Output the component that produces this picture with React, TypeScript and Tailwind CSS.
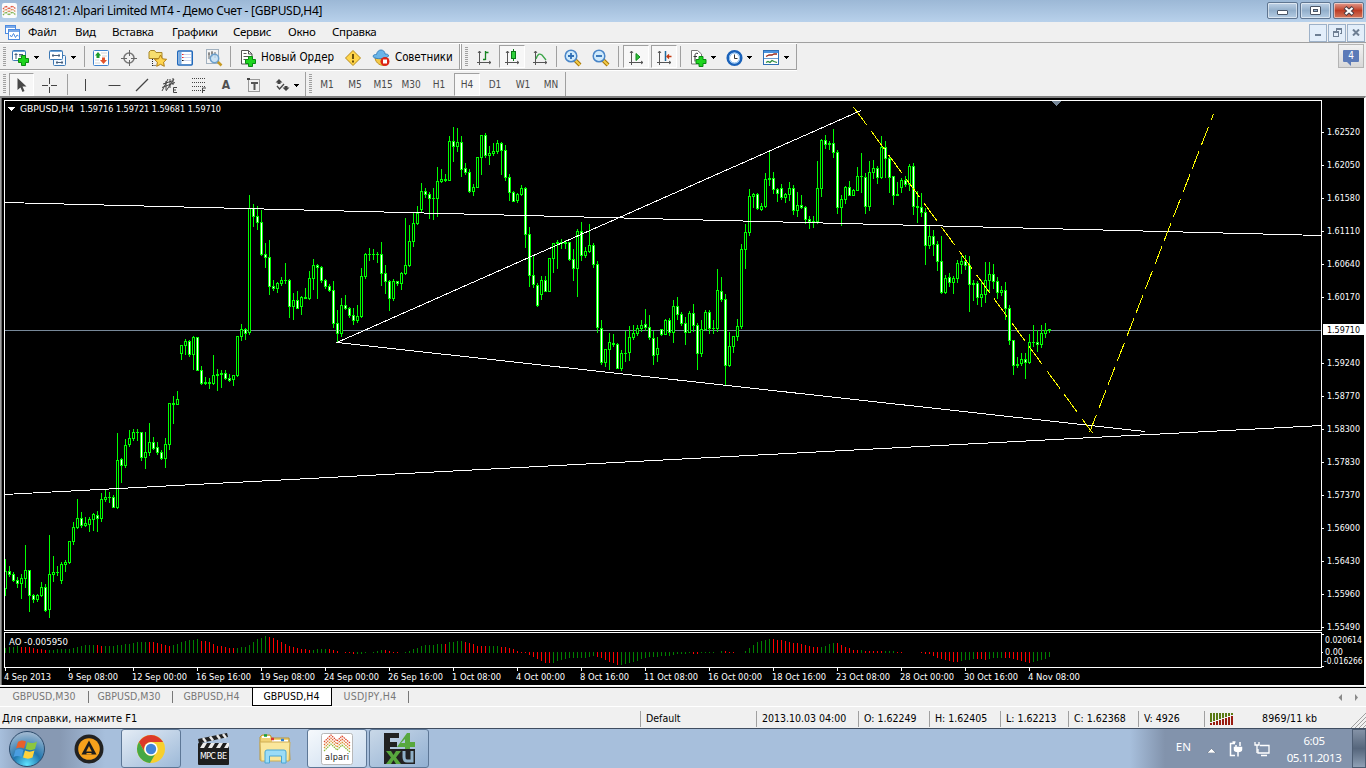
import type { ReactNode } from "react";
import { clsx } from "clsx";

// [high, body top, body bottom, low, 1 = bull / 0 = bear], one candle every 4px
const CANDLES: number[][] = [
  [559,571,588,595,1],[566,571,574,576,0],[572,574,580,581,0],[577,580,583,587,0],[574,578,583,598,1],[545,570,578,587,1],
  [570,570,595,611,0],[594,595,599,602,0],[594,595,599,601,1],[582,587,595,596,1],[584,587,610,611,0],[535,574,609,617,1],
  [556,572,574,581,1],[566,572,572,575,1],[562,564,580,583,1],[560,562,564,571,1],[541,541,562,563,1],[522,527,541,544,1],
  [499,518,527,528,1],[512,518,525,527,0],[517,523,525,526,1],[517,519,524,531,1],[513,514,519,530,1],[511,515,518,531,0],
  [493,499,518,521,1],[490,497,499,501,1],[492,497,497,502,1],[495,497,507,507,0],[433,460,507,508,1],[458,459,465,482,0],
  [439,445,465,467,1],[430,438,444,446,1],[429,432,438,440,1],[429,432,432,440,1],[432,432,457,460,0],[432,452,457,468,1],
  [423,442,452,455,1],[437,442,448,449,0],[442,447,452,454,0],[450,452,458,459,0],[438,444,458,467,1],[403,403,444,449,1],
  [396,403,404,423,1],[391,399,404,404,1],[345,345,353,359,1],[339,341,345,354,1],[340,341,354,356,0],[336,337,354,369,1],
  [337,337,370,370,0],[366,370,383,384,0],[377,382,383,384,0],[378,382,383,388,1],[355,375,383,384,1],[369,374,375,390,1],
  [370,373,374,387,1],[370,373,378,379,0],[374,378,380,381,0],[375,375,379,385,1],[336,336,375,376,1],[324,329,336,340,1],
  [328,329,333,339,0],[195,208,332,334,1],[204,208,216,226,0],[206,216,222,229,0],[210,222,254,255,0],[243,254,257,267,0],
  [240,257,286,294,0],[280,286,288,290,0],[282,283,288,292,1],[277,280,283,285,1],[263,280,280,283,1],[279,280,306,317,0],
  [293,300,306,319,1],[291,300,308,308,0],[296,297,306,314,1],[288,297,298,298,0],[271,278,298,299,1],[259,265,278,289,1],
  [264,265,267,298,0],[266,267,280,282,0],[279,280,286,288,0],[284,286,290,291,0],[281,290,323,327,0],[310,323,333,342,0],
  [298,305,333,336,1],[295,305,308,309,0],[307,308,315,317,0],[308,315,320,324,0],[305,316,320,322,1],[268,276,316,317,1],
  [253,254,276,278,1],[248,254,254,260,1],[249,254,254,259,1],[252,254,254,262,0],[242,254,273,285,0],[265,273,281,293,0],
  [280,281,298,310,0],[279,281,298,300,1],[281,281,283,285,0],[272,273,283,289,1],[218,265,273,274,1],[225,241,265,266,1],
  [212,223,241,246,1],[206,213,223,224,1],[183,191,209,211,1],[188,191,194,197,0],[192,194,198,218,0],[188,198,198,219,1],
  [167,181,198,216,1],[169,179,181,182,1],[174,179,180,181,0],[136,141,180,180,1],[127,141,146,161,0],[128,142,146,151,1],
  [136,142,169,176,0],[163,168,172,174,0],[169,172,191,192,0],[184,187,191,195,1],[157,157,187,187,1],[135,135,157,174,1],
  [133,135,155,157,0],[146,153,155,164,1],[143,151,153,155,1],[140,143,151,153,1],[142,143,150,174,0],[145,150,177,180,0],
  [174,177,192,200,0],[191,192,201,201,0],[193,194,200,202,1],[185,188,194,195,1],[187,188,234,247,0],[227,234,275,286,0],
  [256,275,284,287,0],[283,285,305,306,0],[276,280,294,299,1],[276,280,291,291,0],[258,258,291,291,1],[243,243,258,272,1],
  [240,242,243,268,1],[239,242,243,248,1],[240,242,243,248,0],[242,242,259,260,0],[249,259,268,280,0],[229,231,268,296,1],
  [222,231,255,260,0],[247,251,255,257,1],[224,245,251,252,1],[243,245,264,267,0],[261,264,327,332,0],[320,328,362,364,0],
  [349,349,362,366,1],[333,342,349,369,1],[334,343,344,346,0],[343,344,368,368,0],[350,353,368,370,1],[331,353,353,361,1],
  [326,337,352,360,1],[325,333,337,339,1],[325,328,333,335,1],[320,325,328,331,1],[309,324,327,330,0],[315,327,337,339,0],
  [331,338,355,364,0],[337,348,354,361,1],[329,329,334,335,0],[319,320,334,334,1],[318,320,332,335,0],[300,306,332,342,1],
  [297,306,314,319,0],[312,314,323,325,0],[317,323,332,344,0],[311,313,332,332,1],[304,313,325,331,0],[323,325,353,369,0],
  [320,329,353,356,1],[310,312,329,330,1],[310,312,328,333,0],[320,328,328,333,1],[269,290,328,331,1],[277,291,299,301,0],
  [294,299,365,384,0],[332,346,365,366,1],[336,336,346,352,1],[319,326,336,340,1],[244,249,326,328,1],[224,232,249,268,1],
  [189,196,232,235,1],[193,194,196,207,1],[193,194,208,209,0],[203,206,209,210,1],[173,179,206,207,1],[151,178,179,185,1],
  [172,178,189,193,0],[188,189,193,201,0],[184,188,197,199,0],[193,194,197,202,1],[182,188,194,200,1],[185,188,210,214,0],
  [192,205,210,216,1],[195,205,207,208,0],[206,207,219,223,0],[216,219,221,228,0],[216,221,221,227,1],[161,188,221,223,1],
  [139,140,188,196,1],[135,140,144,148,0],[141,143,144,149,1],[129,143,152,157,0],[150,152,207,213,0],[195,199,207,225,1],
  [186,187,199,203,1],[181,187,195,195,0],[189,190,195,195,1],[167,176,190,190,1],[153,176,176,192,1],[173,177,206,213,0],
  [161,172,206,210,1],[160,168,172,178,1],[166,168,177,183,0],[136,147,177,178,1],[141,147,158,177,0],[156,158,177,192,0],
  [176,176,195,204,0],[182,194,195,195,1],[178,180,187,192,1],[176,180,184,186,0],[164,166,184,190,1],[163,166,206,214,0],
  [191,206,207,222,0],[193,207,212,216,0],[208,212,245,264,0],[226,236,245,248,1],[230,236,244,255,0],[241,244,261,270,0],
  [236,261,292,293,0],[275,278,292,293,1],[273,277,282,286,0],[276,278,282,293,1],[260,263,278,282,1],[256,261,264,273,1],
  [255,261,265,269,0],[256,265,284,311,0],[280,283,284,300,1],[281,283,297,304,0],[280,294,297,306,1],[262,280,294,302,1],
  [262,274,280,291,1],[264,274,281,288,0],[277,281,292,298,0],[286,290,292,295,1],[282,290,308,319,0],[305,308,340,344,0],
  [340,340,365,374,0],[357,364,365,367,0],[353,359,363,365,1],[353,359,362,378,0],[334,342,362,363,1],[325,342,342,346,1],
  [330,342,344,351,0],[325,333,344,347,1],[323,330,333,337,1],[329,329,330,332,1],
];

// Awesome Oscillator heights in px, same spacing as the candles
const AO: number[] = [
  5,6,6,7,6,6,6,5,4,4,3,3,3,4,4,4,4,5,6,7,8,8,8,8,7,7,7,7,8,8,9,9,10,11,11,11,11,11,10,9,8,7,8,9,11,12,13,13,14,12,12,11,9,7,
  7,6,5,5,5,6,6,8,11,14,15,17,16,15,13,11,9,7,6,5,4,4,3,3,4,4,4,4,3,2,0,1,1,-2,-2,-2,-1,0,1,2,3,3,2,1,1,0,1,2,4,5,7,8,8,8,9,
  9,9,11,11,12,12,11,10,9,7,7,7,7,7,7,6,6,5,4,2,1,1,-3,-5,-7,-9,-11,-11,-11,-9,-8,-7,-6,-6,-6,-6,-6,-5,-4,-5,-6,-8,-10,-11,
  -13,-13,-12,-11,-10,-9,-7,-6,-5,-5,-5,-4,-4,-4,-3,-2,-2,-2,-1,-2,-2,-1,1,1,1,0,2,2,1,1,0,0,2,5,8,11,12,13,14,14,13,13,12,
  11,10,10,9,8,7,6,6,6,7,9,10,10,8,6,5,3,3,3,2,2,2,2,2,2,2,2,1,1,0,0,0,0,-1,-2,-2,-4,-6,-7,-8,-9,-10,-10,-9,-8,-8,-7,-7,-7,
  -8,-7,-6,-6,-6,-6,-6,-7,-8,-9,-10,-11,-10,-9,-8,-7,-5,
];

const AO_RED: number[][] = [
  [4,10],[23,24],[36,41],[49,57],[66,76],[81,87],[95,99],[110,110],[115,120],[124,136],[148,153],[172,173],[180,184],
  [192,203],[208,213],[215,219],[223,238],[243,245],[250,256],
];

const PRICES = [
  "1.62520","1.62050","1.61580","1.61110","1.60640","1.60170","","1.59240","1.58770","1.58300","1.57830","1.57370","1.56900",
  "1.56430","1.55960","1.55490",
];

const DATES: [string, number][] = [
  ["4 Sep 2013",47],["9 Sep 08:00",50],["12 Sep 00:00",55],["16 Sep 16:00",55],["19 Sep 08:00",55],["24 Sep 00:00",55],
  ["26 Sep 16:00",55],["1 Oct 08:00",49],["4 Oct 00:00",49],["8 Oct 16:00",49],["11 Oct 08:00",54],["16 Oct 00:00",54],
  ["18 Oct 16:00",54],["23 Oct 08:00",54],["28 Oct 00:00",54],["30 Oct 16:00",54],["4 Nov 08:00",52],
];

const isRed = (i: number) => AO_RED.some(([a, b]) => i >= a && i <= b);

function Chart() {
  return (
    <svg width="1362" height="587" viewBox="2 98 1362 587" className="block" shapeRendering="crispEdges">
      <rect x="2" y="98" width="1362" height="587" fill="#000" />

      {/* Current price */}
      <rect x="5" y="330" width="1317" height="1" fill="#778899" />

      {/* Candles */}
      {CANDLES.map(([h, t, b, l, up], i) => {
        const x = 5 + i * 4;
        return (
          <g key={i}>
            <rect x={x} y={h} width="1" height={l - h + 1} fill="#00ff00" />
            <rect x={x - 1} y={t} width="3" height={b - t + 1} fill="#00ff00" />
            {b - t > 1 && <rect x={x} y={t + 1} width="1" height={b - t - 1} fill={up ? "#000" : "#fff"} />}
          </g>
        );
      })}

      {/* Trend lines */}
      <g stroke="#fff" strokeWidth="1" fill="none">
        <path d="M4 202.5L1322 235.5" />
        <path d="M4 494.5L1322 425.5" />
        <path d="M861 110.5L337 342.5L1145 431.5" />
      </g>
      <g stroke="#ffff00" strokeWidth="1" fill="none">
        <path d="M853.5 107L1092.5 433" strokeDasharray="22.3 7.4" />
        <path d="M1089.500 432.5L1213.5 114" strokeDasharray="19.3 6.45" />
      </g>
      <path d="M1052 101h9l-4.500 5z" fill="#778899" />

      {/* Frames */}
      <rect x="2" y="100" width="2" height="568" fill="#000" />
      <g fill="none" stroke="#fff">
        <rect x="4.5" y="100.500" width="1317" height="530" />
        <rect x="4.5" y="632.5" width="1317" height="35" />
      </g>

      {/* Oscillator */}
      {AO.map((v, i) =>
        v === 0 ? null : (
          <rect
            key={i}
            x={5 + i * 4}
            y={v > 0 ? 653 - v : 652}
            width="1"
            height={Math.abs(v)}
            fill={isRed(i) ? "#ff0000" : "#008000"}
          />
        )
      )}

      {/* Axis ticks */}
      <g fill="#fff">
        {PRICES.map((p, i) => (p ? <rect key={i} x="1322" y={132 + i * 33} width="2" height="1" /> : null))}
        {DATES.map((_, i) => (
          <rect key={i} x={5 + i * 64} y="668" width="1" height="3" />
        ))}
        <rect x="1322" y="634" width="2" height="1" />
        <rect x="1322" y="652" width="1" height="1" />
        <rect x="1322" y="666" width="2" height="1" />
        <rect x="1323" y="324" width="41" height="11" />
      </g>

      <g fill="#fff" className="font-['DejaVu_Sans_Condensed','DejaVu_Sans',sans-serif] text-[9.500px]">
        <path d="M8 107h7l-3.500 4z" />
        <text x="20" y="112" textLength="54" lengthAdjust="spacingAndGlyphs">GBPUSD,H4</text>
        <text x="80" y="112" textLength="141" lengthAdjust="spacingAndGlyphs">1.59716 1.59721 1.59681 1.59710</text>
        <text x="9" y="645" textLength="59" lengthAdjust="spacingAndGlyphs">AO -0.005950</text>
        {PRICES.map((p, i) =>
          p ? (
            <text key={p} x="1327" y={135 + i * 33} textLength="33" lengthAdjust="spacingAndGlyphs">{p}</text>
          ) : null
        )}
        <text x="1327" y="333" textLength="33" lengthAdjust="spacingAndGlyphs" fill="#000">1.59710</text>
        <text x="1325" y="643" textLength="37" lengthAdjust="spacingAndGlyphs">0.020614</text>
        <text x="1325" y="655" textLength="18" lengthAdjust="spacingAndGlyphs">0.00</text>
        <text x="1324" y="664" textLength="38.5" lengthAdjust="spacingAndGlyphs">-0.016266</text>
        {DATES.map(([d, w], i) => (
          <text key={d} x={4 + i * 64} y="680" textLength={w} lengthAdjust="spacingAndGlyphs">{d}</text>
        ))}
      </g>
    </svg>
  );
}

/* Toolbar pieces */

function Grip({ className = "w-[9px]" }: { className?: string }) {
  return (
    <div className={clsx("flex h-full shrink-0 items-center pl-[3px]", className)}>
      <svg width="3" height="20" shapeRendering="crispEdges">
        {Array.from({ length: 10 }, (_, i) => (
          <rect key={i} y={i * 2} width="3" height="1" fill="#a0a0a0" />
        ))}
      </svg>
    </div>
  );
}

function Sep({ className }: { className?: string }) {
  return <div className={clsx("h-[21px] w-px shrink-0 bg-[#a0a0a0]", className)} />;
}

function Caret({ className }: { className?: string }) {
  return (
    <svg width="5" height="3" viewBox="0 0 5 3" shapeRendering="crispEdges" className={clsx("mt-[2px]", className)}>
      <path d="M0 0h5v1h-1v1h-1v1h-1v-1h-1v-1h-1z" fill="#000" />
    </svg>
  );
}

function Cell({ className, children }: { className: string; children: ReactNode }) {
  return <div className={clsx("flex h-full shrink-0 items-center", className)}>{children}</div>;
}

function Pressed({ className, children }: { className?: string; children: ReactNode }) {
  return (
    <div
      className={clsx(
        "flex h-[23px] shrink-0 items-center justify-center border border-r-white border-b-white border-t-[#a0a0a0] border-l-[#a0a0a0] bg-[#f7f7f7]",
        className
      )}
    >
      {children}
    </div>
  );
}

function Ico({ children, w = 18, h = 18 }: { children: ReactNode; w?: number; h?: number }) {
  return (
    <svg width={w} height={h} viewBox={`0 0 ${w} ${h}`} fill="none" className="mt-[2px] shrink-0">
      {children}
    </svg>
  );
}

const Plus = ({ x, y }: { x: number; y: number }) => (
  <path
    transform={`translate(${x} ${y})`}
    d="M3.500 .5h4v3h3v4h-3v3h-4v-3h-3v-4h3z"
    fill="#1fd51f"
    stroke="#0a8a12"
  />
);

const Axes = () => (
  <path d="M3.500 2v14M1 13.500h14M2 4l1.500-2L5 4M13 12l2 1.500-2 1.500" stroke="#555" />
);

function Magnifier({ minus }: { minus?: boolean }) {
  return (
    <Ico>
      <path d="M11 11l5 5" stroke="#a87708" strokeWidth="4" />
      <path d="M11 11l5 5" stroke="#f3cc4a" strokeWidth="2" />
      <circle cx="7" cy="7" r="5.800" fill="#cfeafc" stroke="#4a86c8" strokeWidth="1.500" />
      <path d={minus ? "M4 7h6" : "M4 7h6M7 4v6"} stroke="#2f6fb5" strokeWidth="1.800" />
    </Ico>
  );
}

function MainToolbar() {
  return (
    <div className="flex h-[26px] w-[797px] items-center border-r border-b border-[#a0a0a0]">
      <Grip />
      <Cell className="w-9 pl-[3px]">
        <Ico>
          <rect x="0.500" y="1.500" width="13" height="10" rx="1" fill="#fff" stroke="#3c78b4" />
          <path d="M1 2.500h12" stroke="#6fa6dc" />
          <path d="M4 4v6M2.500 5.500h3M8 5v3M7 5.500h4" stroke="#48607c" />
          <Plus x={6} y={6} />
        </Ico>
        <Caret className="ml-1" />
      </Cell>
      <Cell className="w-[39px] pl-1">
        <Ico>
          <rect x="4.500" y="6.500" width="12" height="10" rx="1" fill="#f2f8ff" stroke="#3c78b4" />
          <path d="M7 13.500h7M8 12v3M13 12v3" stroke="#48607c" />
          <rect x="0.500" y="1.500" width="13" height="9" rx="1" fill="#fff" stroke="#3c78b4" />
          <path d="M1 2.500h12" stroke="#6fa6dc" />
          <path d="M3 6.500h8M4 5v3M10 5v3" stroke="#48607c" />
        </Ico>
        <Caret className="ml-1" />
      </Cell>
      <Sep />
      <Cell className="w-8 justify-center">
        <Ico w={16}>
          <rect x="0.500" y="1.500" width="15" height="15" rx="1" fill="#fff" stroke="#3f83cf" />
          <path d="M8 4h6M9 7h5M2 11h4M2 14h5" stroke="#d4d4d4" />
          <path d="M5 3l3 3.500H6.500V9h-3V6.500H2z" fill="#1c9c2c" />
          <path d="M10.500 15l3.500-4h-2V8.500H9V11H7z" fill="#e2532b" />
        </Ico>
      </Cell>
      <Cell className="w-6 justify-center">
        <Ico w={16}>
          <circle cx="8" cy="9" r="5" stroke="#777" strokeWidth="1.500" />
          <path d="M8.500 1v6M8.500 11v6M0 9.500h6M10 9.500h6" stroke="#666" />
        </Ico>
      </Cell>
      <Cell className="w-8 justify-center">
        <Ico w={19}>
          <path d="M1 3l1.500-1.500h4L8 3.500h6v6H1z" fill="#f7de6e" stroke="#a8872a" />
          <path d="M4.500 10v7M4.500 16.500h4" stroke="#222" strokeDasharray="1 1" />
          <path d="M12.500 6l1.900 3.800 4.200.5-3 2.900.7 4.100-3.800-2-3.800 2 .7-4.100-3-2.900 4.200-.5z" fill="#ffd650" stroke="#b07d14" />
        </Ico>
      </Cell>
      <Cell className="w-6 justify-center">
        <Ico w={16}>
          <rect x="0.750" y="2" width="14.500" height="14" rx="1" fill="#fff" stroke="#1f68bb" strokeWidth="1.500" />
          <rect x="2" y="3" width="2.500" height="12" fill="#78aee6" />
          <path d="M6 5.500h8M6 8.500h8M6 11.500h8" stroke="#ccd5ee" />
          <path d="M5 5.500h1.500M5 8.500h1.500" stroke="#e22" />
          <path d="M5 11.500h1.500" stroke="#111" />
        </Ico>
      </Cell>
      <Cell className="w-[33px] justify-center">
        <Ico>
          <rect x="1.500" y="0.500" width="12" height="14" fill="#f3f3f3" stroke="#a2b1bf" />
          <path d="M4 3v7M7 2v6M10 3v6M3 5h2M6 4h2" stroke="#666" />
          <path d="M12.500 12.500l4 4" stroke="#c79a24" strokeWidth="2.500" />
          <circle cx="9.500" cy="9.500" r="4.200" fill="#c2dff4cc" stroke="#6c9fcb" strokeWidth="1.500" />
        </Ico>
      </Cell>
      <Sep />
      <Cell className="w-[109px] pl-[9px]">
        <Ico w={17}>
          <path d="M1.500 1.500h7l3.500 3.500v10h-10.500z" fill="#fff" stroke="#555" />
          <path d="M8.500 1.500v3.500h3.500M3.500 4.500h3M3.500 7.500h6M3.500 10.500h3" stroke="#555" />
          <Plus x={5} y={7} />
        </Ico>
        <span className="ml-1 pt-[2px] text-[11.500px] whitespace-nowrap">Новый Ордер</span>
      </Cell>
      <Cell className="w-[25px] justify-center">
        <Ico w={16}>
          <path d="M8 1.500L15.500 9 8 16.500.5 9z" fill="#ffd54a" stroke="#b78a17" strokeLinejoin="round" />
          <path d="M8 5v5M8 11.500v2" stroke="#5c4306" strokeWidth="1.800" />
        </Ico>
      </Cell>
      <Cell className="w-[94px] pl-[7px]">
        <Ico>
          <path d="M3 9c1 6 6 7.500 9 7.500l2-7z" fill="#f4c948" stroke="#bf9221" />
          <path d="M1 7.500c0-2 2.500-2 3.500-2C5 2.500 7 1 9 1s4 1.500 4 4c2 0 4 .5 3.500 2C15 10 3 11 1 7.500z" fill="#69b4e8" stroke="#3c83bd" />
          <circle cx="13" cy="12.500" r="4.500" fill="#dc2414" />
          <rect x="11" y="10.500" width="4" height="4" fill="#fff" />
        </Ico>
        <span className="ml-[5px] pt-[2px] text-[11.500px] tracking-[-0.1px]">Советники</span>
      </Cell>
      <div className="h-full w-[3px] shrink-0 border-x border-[#a0a0a0] bg-white" />
      <Grip />
      <Cell className="w-[26px] justify-center">
        <Ico w={16}>
          <Axes />
          <path d="M9.500 2v9M9.500 3.500h3M7 10.500h2.500" stroke="#168321" strokeWidth="1.300" />
        </Ico>
      </Cell>
      <Pressed className="ml-0.5 w-[26px]">
        <Ico w={16}>
          <Axes />
          <path d="M9.500 0v12" stroke="#0a7a16" />
          <rect x="7.500" y="2.500" width="4" height="7" fill="#2fd03b" stroke="#0a7a16" />
        </Ico>
      </Pressed>
      <Cell className="w-[30px] justify-center">
        <Ico w={16}>
          <Axes />
          <path d="M4 10C6 4 8 4.500 10 6l4 5" stroke="#3aa548" strokeWidth="1.300" />
        </Ico>
      </Cell>
      <Sep className="ml-px" />
      <Cell className="w-8 justify-center">
        <Magnifier />
      </Cell>
      <Cell className="w-6 justify-center">
        <Magnifier minus />
      </Cell>
      <Sep className="ml-[5px]" />
      <Pressed className="ml-1 w-[26px]">
        <Ico w={16}>
          <Axes />
          <path d="M8 4.500v7l4-3.500z" fill="#2fc03b" stroke="#0e8a1b" />
        </Ico>
      </Pressed>
      <Pressed className="ml-0.5 w-[26px]">
        <Ico w={16}>
          <Axes />
          <path d="M9.500 2v10" stroke="#1d6a9e" strokeWidth="1.500" />
          <path d="M10.500 7.500h5M13 5.500l-2 2 2 2" stroke="#c33a10" strokeWidth="1.300" />
        </Ico>
      </Pressed>
      <Sep className="ml-[3px]" />
      <Cell className="w-10 pl-[9px]">
        <Ico w={17}>
          <path d="M1.500 1.500h6l4 3.500v10h-10z" fill="#fff" stroke="#777" />
          <path d="M8 4.500c-3-1-3 1-3 3v5M3.500 7.500h3.500" stroke="#333" />
          <Plus x={5.500} y={7} />
        </Ico>
        <Caret className="ml-1" />
      </Cell>
      <Cell className="w-[37px] pl-[5px]">
        <Ico w={17}>
          <circle cx="8.500" cy="9" r="6.800" fill="#e8f4ff" stroke="#1a62ba" strokeWidth="2.500" />
          <circle cx="8.500" cy="9" r="5" fill="#fff" stroke="#7fb9f0" />
          <path d="M8.500 5.500v4h3" stroke="#333" />
        </Ico>
        <Caret className="ml-1" />
      </Cell>
      <Cell className="w-[38px] pl-[5px]">
        <Ico w={17}>
          <rect x="0.500" y="1.500" width="15" height="14" fill="#fff" stroke="#2f6fb5" />
          <path d="M1 3h14" stroke="#4b93df" strokeWidth="2" />
          <path d="M1 9.500h14" stroke="#6a9bd0" />
          <path d="M3 7.500l3-1.500h3l2-1h3" stroke="#9b2b1b" strokeWidth="1.300" />
          <path d="M3 13.500l2-1 2 1 2-2 2 1 3 1" stroke="#2b8b3b" strokeWidth="1.300" />
        </Ico>
        <Caret className="ml-1" />
      </Cell>
    </div>
  );
}

function DrawingToolbar() {
  const label = "w-7 justify-center pt-px text-[10px] text-[#4a4a4a]";
  return (
    <div className="flex h-[26px] items-center border-t border-white pt-px text-[#505050]">
      <Grip />
      <Pressed className="w-[25px]">
        <Ico w={16}>
          <path d="M3.500 2v12l3-2.500 2 4.500 2-1-2-4.500h4z" fill="#484848" />
        </Ico>
      </Pressed>
      <Cell className="w-[30px] justify-center">
        <Ico w={15} h={15}>
          <path d="M7.500 0v6M7.500 9v6M0 7.500h6M9 7.500h6" stroke="#444" />
        </Ico>
      </Cell>
      <Sep className="ml-[3px]" />
      <Cell className="w-9 justify-center">
        <Ico w={14} h={14}>
          <path d="M6.500 1v12" stroke="#444" />
        </Ico>
      </Cell>
      <Cell className="w-5 justify-center">
        <Ico w={13} h={14}>
          <path d="M.5 7.500h12" stroke="#444" />
        </Ico>
      </Cell>
      <Cell className="w-9 justify-center">
        <Ico w={14} h={14}>
          <path d="M1 13L13 1" stroke="#444" strokeWidth="1.200" />
        </Ico>
      </Cell>
      <Cell className="w-5 justify-center">
        <Ico w={18} h={18}>
          <path d="M1 15L7 3M5 15l8-12M1 11.500l13-5M2 8l9-3M5 5v9M9 3v9M12 2v7" stroke="#444" />
          <path d="M16 11.500h-3.500v5H16M12.500 14H15" stroke="#444" />
        </Ico>
      </Cell>
      <Cell className="w-[37px] justify-center">
        <Ico w={16} h={18}>
          <path d="M1 2.500h14M1 6.500h14M1 10.500h14M1 14.500h9" stroke="#444" strokeDasharray="1 1" />
          <path d="M11.500 17v-5H15M11.500 14.500H14" stroke="#444" />
        </Ico>
      </Cell>
      <Cell className="w-[18px] justify-center pt-px text-xs font-bold">A</Cell>
      <Cell className="w-[38px] justify-center">
        <Ico w={14} h={16}>
          <rect x="1.500" y="2.500" width="11" height="12" stroke="#444" strokeDasharray="1 1" />
          <path d="M0 1h3v2H0z" fill="#444" />
          <path d="M4 6h7M7.500 6v7" stroke="#555" strokeWidth="2" />
        </Ico>
      </Cell>
      <Cell className="w-[32px] pl-[2px]">
        <Ico w={15} h={14}>
          <path d="M4 1l3.500 3.500h-2V6h-3V4.500H.5zM11 13l-3.500-3.500h2V8h3v1.500h2z" fill="#444" />
          <path d="M2 8l2.500 3L9 6" stroke="#444" strokeWidth="1.300" />
        </Ico>
        <Caret className="ml-1" />
      </Cell>
      <Sep className="h-full" />
      <Grip className="w-[7px]" />
      <Cell className={label}>M1</Cell>
      <Cell className={label}>M5</Cell>
      <Cell className={label}>M15</Cell>
      <Cell className={label}>M30</Cell>
      <Cell className={label}>H1</Cell>
      <Pressed className="mr-px ml-px w-[26px] pt-px text-[10px] text-[#4a4a4a]">H4</Pressed>
      <Cell className={label}>D1</Cell>
      <Cell className={label}>W1</Cell>
      <Cell className={label}>MN</Cell>
      <Sep className="h-full" />
    </div>
  );
}

function TitleBar() {
  const btn = "flex h-[17px] w-[31px] items-center justify-center rounded-[2px] border border-[#5f7590] shadow-[inset_0_0_0_1px_#ffffff80]";
  return (
    <div className="flex h-[22px] bg-linear-to-b from-[#9cb8d6] to-[#b8d1eb]">
      <svg width="15" height="15" viewBox="0 0 15 15" className="mt-[3px] ml-[2px]">
        <rect width="15" height="15" rx="2" fill="#fbfbfb" />
        <g fill="none" strokeDasharray="1.500 .7">
          <path d="M1 6l3-3 3 3 3-3 4 3" stroke="#e0523c" strokeWidth="1.300" />
          <path d="M1 9l3-3 3 3 3-3 4 3" stroke="#d98a5a" strokeWidth="1.300" />
          <path d="M1 12l3-3 3 3 3-3 4 3" stroke="#7db04e" strokeWidth="1.300" />
        </g>
      </svg>
      <span className="mt-[2px] ml-1 font-['Noto_Sans','Open_Sans',sans-serif] text-[12px] leading-[17px] tracking-[-0.28px] whitespace-nowrap">
        6648121: Alpari Limited MT4 - Демо Счет - [GBPUSD,H4]
      </span>
      <div className="mt-[2px] ml-auto flex gap-[2px]">
        <div className={clsx(btn, "bg-linear-to-b from-[#bfd2e6] via-[#93afcb] to-[#b5cde4]")}>
          <div className="mt-1 h-[5px] w-[11px] rounded-[1px] border border-[#4a5566] bg-white" />
        </div>
        <div className={clsx(btn, "bg-linear-to-b from-[#bfd2e6] via-[#93afcb] to-[#b5cde4]")}>
          <div className="flex h-[9px] w-[11px] items-center justify-center rounded-[1px] border border-[#4a5566] bg-white">
            <div className="h-[3px] w-[5px] border border-[#4a5566] bg-[#93afcb]" />
          </div>
        </div>
        <div className={clsx(btn, "mr-[2px] border-[#4c1620] bg-linear-to-b from-[#e39a8d] via-[#bd3d25] to-[#d4755a]")}>
          <svg width="12" height="10" viewBox="0 0 12 10">
            <path d="M2 1.500l8 7M10 1.500l-8 7" stroke="#4a3c44" strokeWidth="4.200" />
            <path d="M2.500 2l7 6M9.500 2l-7 6" stroke="#fff" strokeWidth="2.200" />
          </svg>
        </div>
      </div>
    </div>
  );
}

function MenuBar() {
  const mdi = "flex h-[18px] w-[18px] items-center justify-center border border-[#9db1c8] bg-[#e3eefa]";
  return (
    <div className="flex h-5 items-center font-['Noto_Sans','Open_Sans',sans-serif] text-[11.500px] tracking-[-0.3px]">
      <svg width="15" height="15" viewBox="0 0 15 15" fill="none" className="ml-[5px] shrink-0">
        <rect x=".5" y=".5" width="10" height="8" fill="#fff" stroke="#4d8be0" />
        <path d="M1 2h9" stroke="#4d8be0" strokeWidth="1.500" />
        <rect x="3.500" y="4.500" width="11" height="10" fill="#fff" stroke="#4d8be0" />
        <path d="M4 6h10" stroke="#4d8be0" strokeWidth="1.500" />
        <path d="M5 10l1.500 2L8.500 8.500l2 4 1.500-2.500 1.500 1" stroke="#4d8be0" />
      </svg>
      <span className="ml-2 w-[47px]">Файл</span>
      <span className="w-[37px]">Вид</span>
      <span className="w-[60px]">Вставка</span>
      <span className="w-[61px]">Графики</span>
      <span className="w-[55px]">Сервис</span>
      <span className="w-11">Окно</span>
      <span>Справка</span>
      <div className="mt-px mr-px ml-auto flex gap-px">
        <div className={mdi}>
          <div className="mt-[5px] h-[2px] w-[6px] bg-[#6e7f94]" />
        </div>
        <div className={mdi}>
          <svg width="9" height="9" viewBox="0 0 9 9" fill="none" stroke="#6e7f94" shapeRendering="crispEdges">
            <path d="M3 1.500h5.500v4H7M3.500 1v2M3 .5h6" />
            <path d="M.5 4.500h5v4h-5zM0 3.500h6" />
          </svg>
        </div>
        <div className={mdi}>
          <svg width="8" height="7" viewBox="0 0 8 7">
            <path d="M1 .5l6 6M7 .5l-6 6" stroke="#6e7f94" strokeWidth="2" />
          </svg>
        </div>
      </div>
    </div>
  );
}

function ChartTabs() {
  const tab = "flex h-full items-center justify-center";
  return (
    <div className="flex h-[19px] items-center border-b border-white pl-[2px] text-[10.500px] tracking-[0.02px] text-[#787878]">
      <div className={clsx(tab, "w-[86px] pr-[2px]")}>GBPUSD,M30</div>
      <div className="h-3 w-px bg-[#787878]" />
      <div className={clsx(tab, "w-[83px] pr-[3px]")}>GBPUSD,M30</div>
      <div className="h-3 w-px bg-[#787878]" />
      <div className={clsx(tab, "w-[79px] pr-[2px]")}>GBPUSD,H4</div>
      <div className={clsx(tab, "w-20 border-x border-b border-black bg-white pr-px text-black")}>GBPUSD,H4</div>
      <div className={clsx(tab, "w-[76px] tracking-[0.3px]")}>USDJPY,H4</div>
      <div className="h-3 w-px bg-[#787878]" />
      <svg width="20" height="7" viewBox="0 0 20 7" className="mr-[8px] ml-auto" fill="#8a8a8a">
        <path d="M4 0v7L.5 3.500zM17 0v7l3-3.500z" />
      </svg>
    </div>
  );
}

function StatusBar() {
  const field = "flex h-4 items-center border-l border-[#a0a0a0] pl-[5px] whitespace-nowrap";
  return (
    <div className="flex h-[21px] items-center pt-[3px] text-[10.500px]">
      <span className="w-[640px] pl-[2px] text-[11px] tracking-[0.05px]">Для справки, нажмите F1</span>
      <span className={clsx(field, "w-[116px]")}>Default</span>
      <span className={clsx(field, "w-[102px]")}>2013.10.03 04:00</span>
      <span className={clsx(field, "w-[71px]")}>O: 1.62249</span>
      <span className={clsx(field, "w-[71px]")}>H: 1.62405</span>
      <span className={clsx(field, "w-[68px]")}>L: 1.62213</span>
      <span className={clsx(field, "w-[70px]")}>C: 1.62368</span>
      <span className={clsx(field, "w-[66px]")}>V: 4926</span>
      <span className={clsx(field, "w-[146px]")}>
        <svg width="23" height="12" viewBox="0 0 23 12" shapeRendering="crispEdges">
          {Array.from({ length: 8 }, (_, i) => (
            <g key={i}>
              <rect x={i * 3} y="0" width="2" height={9 - i} fill="#5a7a14" />
              <rect x={i * 3} y={10 - i} width="2" height={2 + i} fill="#9a1c10" />
            </g>
          ))}
        </svg>
        <span className="ml-[29px] tracking-[0.15px]">8969/11 kb</span>
      </span>
      <svg width="15" height="15" viewBox="0 0 15 15" className="mt-[3px] ml-auto" stroke="#a0a0a0">
        <path d="M0 15L15 0M4 15L15 4M8 15l7-7M12 15l3-3" />
      </svg>
    </div>
  );
}

function Taskbar() {
  const active = "flex h-[39px] w-[60px] items-center justify-center rounded-[3px] border border-[#5d7796]";
  return (
    <div className="flex h-10 items-center border-t border-[#3f4d60] bg-[linear-gradient(90deg,#a7bfdc_0,#8799b3_30px,#8799b3_60px,#a7bfdc_105px,#a7bfdc_1130px,#8293ac_1165px,#8293ac_100%)] font-['Noto_Sans','Open_Sans',sans-serif]">
      <svg width="38" height="38" viewBox="0 0 38 38" className="ml-2">
        <defs>
          <radialGradient id="orb" cx="50%" cy="95%" r="90%">
            <stop offset="0" stopColor="#5fe4ff" />
            <stop offset=".45" stopColor="#2076ae" />
            <stop offset="1" stopColor="#9cb6cf" />
          </radialGradient>
        </defs>
        <circle cx="19" cy="19" r="17.500" fill="url(#orb)" stroke="#2c4a6b" />
        <path d="M10 12c3-2 5-2 8-.5l-2 7c-3-1.500-5-1.500-8 0z" fill="#e8602a" />
        <path d="M19.500 12c3 1.500 6 1.500 9.500-.5l-2 7.500c-3 1.500-6 1.500-9.500 0z" fill="#8cc63e" />
        <path d="M7.500 20c3-1.500 5-1.500 8 0l-2 7c-3-1.500-5-1.500-8 0z" fill="#4a9ee0" />
        <path d="M17 20.500c3 1.500 6 1.500 9.500 0l-2 7c-3 1.500-6 1.500-9.500 0z" fill="#ffd23c" />
      </svg>
      <svg width="30" height="30" viewBox="0 0 30 30" className="ml-7">
        <circle cx="15" cy="15" r="14.500" fill="#222" />
        <circle cx="15" cy="15" r="10.800" fill="#f6a11c" />
        <path d="M15 6.500l7.500 14h-15z" fill="#1d1d1d" />
        <path d="M15 12l2.800 5.500h-5.600z" fill="#f6a11c" />
        <path d="M12.500 20.500h5v-1.500h-5z" fill="#f6a11c" />
      </svg>
      <div className={clsx(active, "ml-[17px] bg-linear-to-br from-[#e4ecf5] to-[#9db9d8]")}>
        <svg width="30" height="30" viewBox="0 0 30 30">
          <circle cx="15" cy="15" r="14" fill="#f7cf2d" />
          <path d="M2.900 8A14 14 0 0 1 27.100 8H15a7 7 0 0 0-6.500 9.500z" fill="#dc3a2a" />
          <path d="M2.900 8A14 14 0 0 0 14 29l5-8.500a7 7 0 0 1-10-2z" fill="#46a845" />
          <circle cx="15" cy="15" r="6.700" fill="#fff" />
          <circle cx="15" cy="15" r="5.200" fill="#4284d8" />
        </svg>
      </div>
      <svg width="33" height="34" viewBox="0 0 33 34" className="ml-4">
        <path d="M1 7L30 1l1 4L2 11.500z" fill="#222" />
        <path d="M6 6l3 4M13 4.500l3 4M20 3l3 4M26 2l3 4" stroke="#e8e8e8" strokeWidth="2.500" />
        <rect x="1" y="11" width="31" height="22" rx="1" fill="#1e1e1e" />
        <path d="M6 11l-3 5h4l3-5zM14 11l-3 5h4l3-5zM22 11l-3 5h4l3-5zM30 11l-3 5h4l1-2v-3z" fill="#ececec" />
        <text x="3" y="27" fill="#fff" textLength="27" className="font-['DejaVu_Sans_Condensed',sans-serif] text-[9px]">MPC BE</text>
      </svg>
      <svg width="34" height="32" viewBox="0 0 34 32" className="ml-[28px]">
        <path d="M2 4l2-2h8l2 3h17l1 22H2z" fill="#f1d275" stroke="#b9963c" />
        <path d="M4 4h8M14 8h10M20 8h10" stroke="#fff" strokeWidth="2" />
        <path d="M6 2.500h3" stroke="#19a03a" strokeWidth="2.500" />
        <path d="M13 6h3" stroke="#d33" strokeWidth="2.500" />
        <path d="M23 7h3" stroke="#2b7ed8" strokeWidth="2.500" />
        <path d="M2 9h30l-1 19H3z" fill="#fae79c" stroke="#cfae54" />
        <path d="M7 30V19q0-2 2-2h17q2 0 2 2v11h-4.500v-7h-12v7z" fill="#9bdcf7" stroke="#4aa6d4" />
      </svg>
      <div className={clsx(active, "ml-[15px] bg-linear-to-br from-[#f6f9fc] to-[#c9dbee]")}>
        <svg width="32" height="32" viewBox="0 0 32 32">
          <rect x=".5" y=".5" width="31" height="31" rx="2" fill="#fff" stroke="#b8b8b8" />
          <g fill="none" strokeWidth="1.200" strokeDasharray="1.600 .7">
            <path d="M3 9l7-7 6 6 5-5 8 7" stroke="#dd4a2e" />
            <path d="M3 12l7-7 6 6 5-5 8 7" stroke="#e0662e" />
            <path d="M3 15l7-7 6 6 5-5 8 7" stroke="#d99433" />
            <path d="M3 18l7-7 6 6 5-5 8 7" stroke="#8fba3c" />
          </g>
          <text x="4" y="27" fill="#222" textLength="24" className="font-['DejaVu_Sans_Condensed',sans-serif] text-[9px]">alpari</text>
        </svg>
      </div>
      <div className={clsx(active, "ml-[2px] bg-linear-to-br from-[#c9d8e8] to-[#92b0d2]")}>
        <svg width="33" height="33" viewBox="0 0 33 33">
          <path d="M1 1h15v5H7v4h7v5H7v2H1z" fill="#222" />
          <path d="M27 1v9h5v5h-5v3h-5v-3h-8L24 1zM22 7l-4 4h4z" fill="#58a83e" />
          <path d="M1 17h31v15H1z" fill="#222" />
          <path d="M3 19h5l2.500 4 2.500-4h5l-5 6.500L18 32h-5l-2.500-4L8 32H3l5-6.500z" fill="#58a83e" />
          <path d="M21 19v6q0 4 3 4h5V19" fill="none" stroke="#8fb0c8" strokeWidth="3" />
        </svg>
      </div>

      {/* Tray */}
      <div className="ml-auto flex h-full items-center text-white">
        <span className="pb-1 text-[11.500px]">EN</span>
        <svg width="9" height="5" viewBox="0 0 9 5" className="mt-[3px] ml-4">
          <path d="M0 5L4.500 .5 9 5z" fill="#fff" stroke="#4a5a70" strokeWidth=".5" />
        </svg>
        <svg width="15" height="16" viewBox="0 0 15 16" fill="none" stroke="#fff" strokeWidth="1.500" className="mt-px ml-3">
          <path d="M7 2.500H2.500v12H7M4.500 1h3" />
          <path d="M8 4v3M12 1v4M10 11v4.500" />
          <path d="M6.500 6.500h7v2q0 2-3.500 2t-3.500-2z" fill="#fff" />
        </svg>
        <svg width="16" height="16" viewBox="0 0 16 16" fill="none" stroke="#fff" strokeWidth="1.300" className="mt-px ml-[11px]">
          <path d="M6 4.500h9v7.500H4V8M7 14.500h6" />
          <path d="M1 1v3h4V1M3 4v8" />
        </svg>
        <div className="ml-[11px] flex w-[66px] flex-col items-center text-[11.500px] leading-[17px] tracking-[-0.42px]">
          <span>6:05</span>
          <span>05.11.2013</span>
        </div>
        <div className="ml-[5px] h-full w-[14px] border border-[#4d5d73] bg-linear-to-b from-[#8492a6] via-[#56667c] to-[#8fa0b5]" />
      </div>
    </div>
  );
}

export default function App() {
  return (
    <div className="flex h-[768px] w-[1366px] flex-col overflow-hidden bg-[#f0f0f0] font-['DejaVu_Sans_Condensed','DejaVu_Sans',sans-serif] text-black">
      <TitleBar />
      <MenuBar />
      <div className="flex h-[54px] justify-between border-t border-[#a0a0a0]">
        <div className="flex flex-col border-t border-white">
          <MainToolbar />
          <DrawingToolbar />
        </div>
        <div className="mt-px mr-[2px] flex h-6 w-[26px] items-center justify-center border border-[#b4b4b4] bg-linear-to-b from-[#f2f2f2] to-[#d8d8d8]">
          <div className="relative flex h-3 w-4 items-center justify-center rounded-[1px] bg-[#5b7ab8] text-[10px] leading-none text-white">
            4
            <svg width="5" height="4" viewBox="0 0 5 4" className="absolute top-3 left-1">
              <path d="M0 0h4v4z" fill="#5b7ab8" />
            </svg>
          </div>
        </div>
      </div>
      <div className="flex border-t-2 border-r border-b border-t-[#808080] border-r-white border-b-white bg-white">
        <div className="w-px bg-[#a0a0a0]" />
        <div className="w-px bg-[#696969]" />
        <Chart />
      </div>
      <div className="mt-px h-px shrink-0 bg-black" />
      <ChartTabs />
      <StatusBar />
      <Taskbar />
    </div>
  );
}
